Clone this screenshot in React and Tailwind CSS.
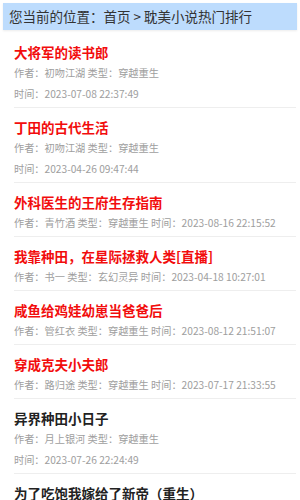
const books = [
  { title: '大将军的读书郎', author: '初吻江湖', type: '穿越重生', time: '2023-07-08 22:37:49', hot: true, split: true },
  { title: '丁田的古代生活', author: '初吻江湖', type: '穿越重生', time: '2023-04-26 09:47:44', hot: true, split: true },
  { title: '外科医生的王府生存指南', author: '青竹酒', type: '穿越重生', time: '2023-08-16 22:15:52', hot: true },
  { title: '我靠种田，在星际拯救人类[直播]', author: '书一', type: '玄幻灵异', time: '2023-04-18 10:27:01', hot: true },
  { title: '咸鱼给鸡娃幼崽当爸爸后', author: '管红衣', type: '穿越重生', time: '2023-08-12 21:51:07', hot: true },
  { title: '穿成克夫小夫郎', author: '路归途', type: '穿越重生', time: '2023-07-17 21:33:55', hot: true },
  { title: '异界种田小日子', author: '月上银河', type: '穿越重生', time: '2023-07-26 22:24:49', split: true },
  { title: '为了吃饱我嫁给了新帝（重生）', author: '', type: '', time: '' },
];

function BookRow({ book }) {
  return (
    <li className="ml-[14px] border-b border-[#eeeeee] pb-[3px] pt-[9px]">
      <h3
        className={`text-[13.5px] font-bold leading-[20px] ${
          book.hot ? 'text-[#f20d0d]' : 'text-[#222222]'
        }`}
      >
        {book.title}
      </h3>
      {book.author && (
        <p className="text-[10.2px] leading-[21px] text-[#9e9e9e]">
          <span>作者：{book.author} 类型：{book.type}</span>
          {book.split ? (
            <span className="block">时间：{book.time}</span>
          ) : (
            <span> 时间：{book.time}</span>
          )}
        </p>
      )}
    </li>
  );
}

export default function App() {
  return (
    <div
      className="h-[500px] w-[300px] overflow-hidden bg-white"
      style={{ fontFamily: '"Noto Sans CJK SC", "Liberation Sans", sans-serif' }}
    >
      <div className="px-[3px] pt-[3px]">
        <div className="flex h-[27px] items-center bg-[#bddcfd] px-[6px] text-[13.5px] text-[#333333] shadow-[0_1px_2px_rgba(0,0,0,0.08)]">
          您当前的位置：首页 &gt; 耽美小说热门排行
        </div>
      </div>
      <ul className="mt-[3px] pr-[4px]">
        {books.map((b) => (
          <BookRow key={b.title} book={b} />
        ))}
      </ul>
    </div>
  );
}
